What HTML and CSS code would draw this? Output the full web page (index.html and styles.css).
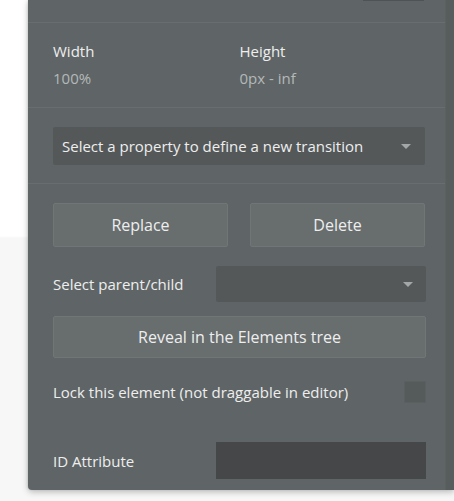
FILE: index.html
```html
<!DOCTYPE html>
<html>
<head>
<meta charset="utf-8">
<link rel="stylesheet" href="styles.css">
</head>
<body>
<div class="page">
  <div class="panel">
    <div class="content">
      <div class="section top">
        <div class="prev-input"></div>
      </div>
      <div class="section dims">
        <div class="dim">
          <div class="dim-label">Width</div>
          <div class="dim-value">100%</div>
        </div>
        <div class="dim">
          <div class="dim-label">Height</div>
          <div class="dim-value">0px - inf</div>
        </div>
      </div>
      <div class="section trans">
        <div class="dropdown wide">
          <span>Select a property to define a new transition</span>
          <span class="caret"></span>
        </div>
      </div>
      <div class="section actions">
        <div class="btn-row">
          <div class="btn">Replace</div>
          <div class="btn">Delete</div>
        </div>
        <div class="row parent-row">
          <span class="label">Select parent/child</span>
          <div class="dropdown field"><span></span><span class="caret"></span></div>
        </div>
        <div class="btn reveal">Reveal in the Elements tree</div>
        <div class="row lock-row">
          <span class="label">Lock this element (not draggable in editor)</span>
          <span class="checkbox"></span>
        </div>
        <div class="row id-row">
          <span class="label">ID Attribute</span>
          <div class="text-input"></div>
        </div>
      </div>
    </div>
    <div class="scrollbar"></div>
  </div>
</div>
</body>
</html>
```

FILE: styles.css
```css
html, body {
  margin: 0;
  padding: 0;
}
body {
  width: 454px;
  height: 501px;
  overflow: hidden;
  font-family: "Open Sans", "Noto Sans", sans-serif;
  font-size: 15px;
  background: linear-gradient(#ffffff 0, #ffffff 236px, #f7f7f7 238px, #f7f7f7 100%);
}
.page {
  padding-left: 28px;
  height: 501px;
  box-sizing: border-box;
}
.panel {
  display: flex;
  height: 490px;
  background: #5f6566;
  border-bottom-left-radius: 4px;
  box-shadow: 0 2px 6px rgba(0, 0, 0, 0.25), -1px 0 2px rgba(0, 0, 0, 0.08);
}
.content {
  flex: 1;
  display: flex;
  flex-direction: column;
}
.scrollbar {
  width: 8px;
  background: #575c5d;
  border-left: 1px solid #5b6061;
}
.section {
  padding: 0 19px 0 25px;
  border-bottom: 1px solid #686d6e;
}
.section.top {
  height: 22px;
  display: flex;
  justify-content: flex-end;
  padding-right: 20px;
}
.prev-input {
  width: 61px;
  height: 1px;
  margin-right: 1px;
  background: #4f5354;
}
.dims {
  display: grid;
  grid-template-columns: 1fr 1fr;
  padding-top: 18px;
  padding-bottom: 19px;
}
.dim-label {
  color: #eeeeee;
  line-height: 20px;
}
.dim-value {
  color: #b4b8b9;
  line-height: 20px;
  margin-top: 7px;
}
.trans {
  padding-top: 19px;
  padding-bottom: 18px;
  padding-right: 20px;
}
.dropdown {
  display: flex;
  align-items: center;
  justify-content: space-between;
  background: #545859;
  border-radius: 2px;
  color: #eeeeee;
  box-sizing: border-box;
}
.dropdown.wide {
  height: 38px;
  padding: 0 14px 0 9px;
}
.caret {
  width: 0;
  height: 0;
  border-left: 5px solid transparent;
  border-right: 5px solid transparent;
  border-top: 5px solid #a3a7a8;
}
.actions {
  border-bottom: none;
  padding-top: 19px;
  flex: 1;
}
.btn-row {
  display: grid;
  grid-template-columns: 1fr 1fr;
  gap: 22px;
  margin-right: 1px;
}
.btn {
  height: 44px;
  box-sizing: border-box;
  display: flex;
  align-items: center;
  justify-content: center;
  background: #686d6e;
  border: 1px solid #707576;
  border-radius: 2px;
  color: #eeeeee;
  font-size: 16px;
}
.row {
  display: flex;
  align-items: center;
  justify-content: space-between;
  color: #eeeeee;
}
.parent-row {
  margin-top: 19px;
  height: 36px;
}
.dropdown.field {
  width: 210px;
  height: 36px;
  padding: 0 13px 0 9px;
}
.reveal {
  margin-top: 14px;
  height: 42px;
}
.lock-row {
  margin-top: 23px;
  height: 22px;
}
.checkbox {
  width: 22px;
  height: 22px;
  box-sizing: border-box;
  background: #555a5b;
  border: 1px solid #5a5f60;
  border-radius: 1px;
}
.id-row {
  margin-top: 39px;
  height: 37px;
}
.text-input {
  width: 210px;
  height: 37px;
  background: #464748;
}
.label {
  line-height: 20px;
}
```
